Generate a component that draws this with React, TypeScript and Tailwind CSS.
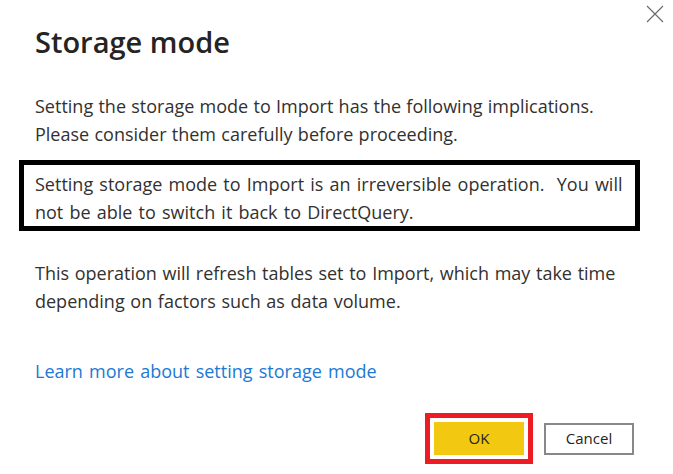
import React from 'react';

function CloseIcon() {
  return (
    <svg width="18" height="18" viewBox="0 0 18 18" fill="none">
      <path d="M1 1 L17 17 M17 1 L1 17" stroke="#6b6a69" strokeWidth="1.1" />
    </svg>
  );
}

export default function App() {
  return (
    <div
      className="relative w-[673px] h-[474px] bg-white text-[#323130] overflow-hidden"
      style={{ fontFamily: '"Open Sans", "Noto Sans", sans-serif' }}
    >
      <button className="absolute top-[5px] right-[9px] p-0" aria-label="Close">
        <CloseIcon />
      </button>

      <div className="flex flex-col pl-[35px] pt-[24px]">
        <h2 className="text-[29px] leading-[36px] font-semibold text-[#252423] whitespace-nowrap">
          Storage mode
        </h2>

        <p className="mt-[32px] text-[18px] leading-[28px] whitespace-nowrap [word-spacing:0.6px]">
          Setting the storage mode to Import has the following implications.
          <br />
          Please consider them carefully before proceeding.
        </p>

        <div className="mt-[12px] -ml-[16px] w-[621px] border-[5px] border-black pl-[11px] pt-[5px]">
          <p className="text-[18px] leading-[28px] whitespace-pre [word-spacing:1.5px]">
            {'Setting storage mode to Import is an irreversible operation.  You will'}
            <br />
            {'not be able to switch it back to DirectQuery.'}
          </p>
        </div>

        <p className="mt-[28px] text-[18px] leading-[28px] whitespace-nowrap [word-spacing:1px]">
          This operation will refresh tables set to Import, which may take time
          <br />
          depending on factors such as data volume.
        </p>

        <a
          href="#"
          className="mt-[42px] self-start text-[18px] leading-[28px] text-[#2079d4] whitespace-nowrap [word-spacing:1.5px]"
        >
          Learn more about setting storage mode
        </a>
      </div>

      <div className="flex items-center justify-end gap-[11px] pr-[39px] mt-[28px]">
        <div className="border-[5px] border-[#ed1c24] p-[4px]">
          <button className="w-[90px] h-[33px] bg-[#f2c811] text-[15px] text-[#252423]">OK</button>
        </div>
        <button className="w-[90px] h-[32px] border-2 border-[#8a8886] bg-white text-[15px] text-[#252423]">
          Cancel
        </button>
      </div>
    </div>
  );
}
